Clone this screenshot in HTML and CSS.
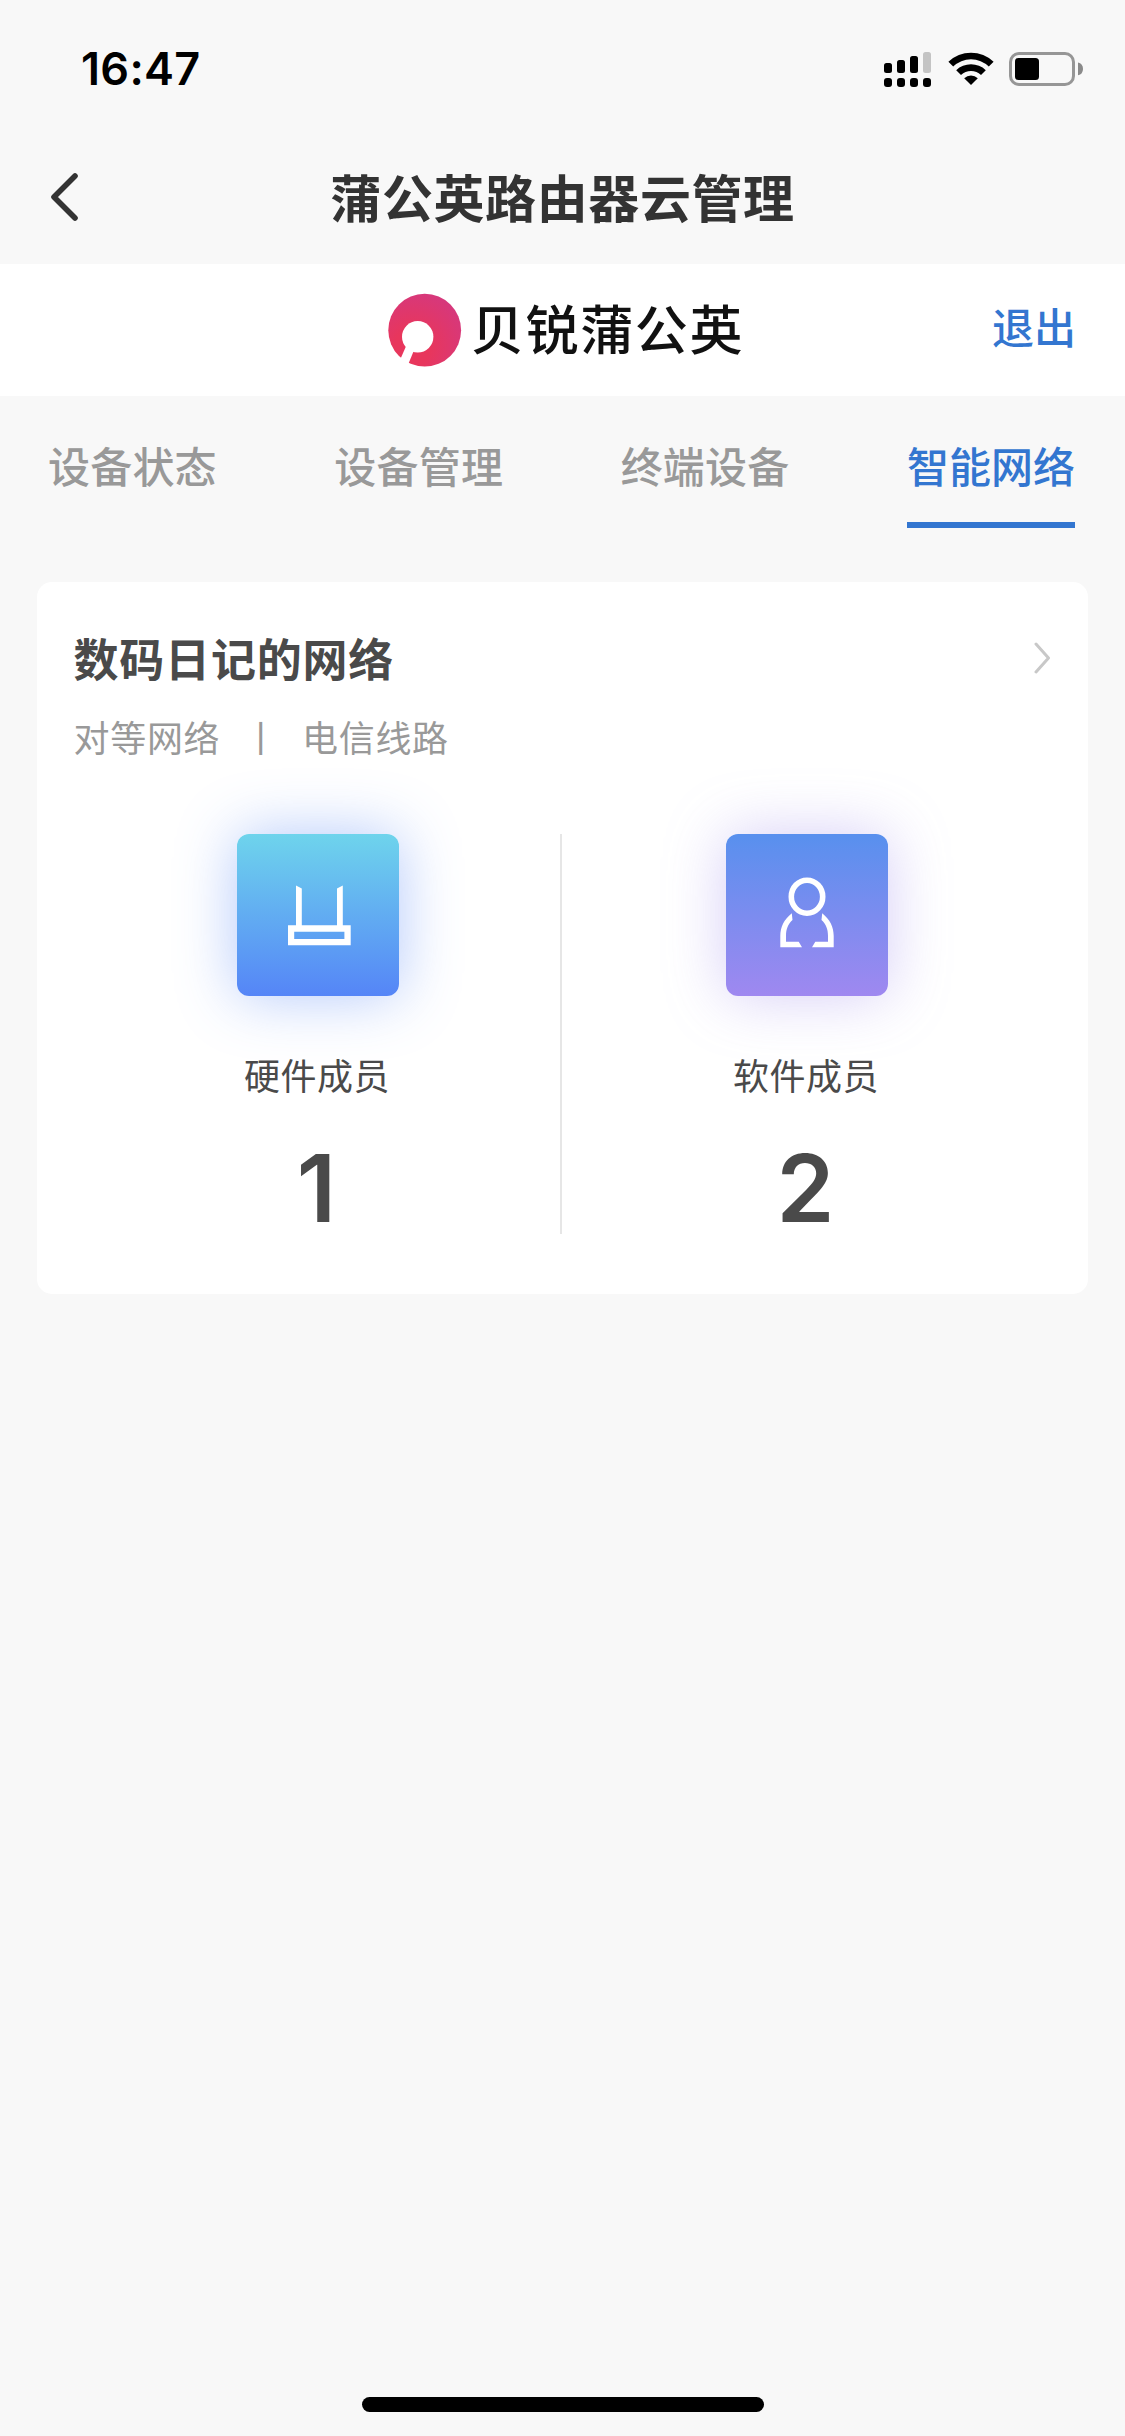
FILE: index.html
```
<!DOCTYPE html>
<html lang="zh-CN">
<head>
    <meta charset="UTF-8">
    <meta name="viewport" content="width=device-width, initial-scale=1.0">
    <title>蒲公英路由器云管理</title>
    <link rel="stylesheet" href="styles.css">
</head>
<body>
    <div class="status-bar">
        <span class="time">16:47</span>
        <div class="status-icons">
            <svg class="signal" width="48" height="36" viewBox="0 0 48 36">
                <rect x="0" y="12" width="8" height="10" rx="2.5"/>
                <rect x="13" y="9" width="8" height="13" rx="2.5"/>
                <rect x="26" y="5" width="8" height="17" rx="2.5"/>
                <rect x="39" y="1" width="8" height="21" rx="2.5" fill="#c4c4c4"/>
                <rect x="0" y="27" width="8" height="9" rx="3"/>
                <rect x="13" y="27" width="8" height="9" rx="3"/>
                <rect x="26" y="27" width="8" height="9" rx="3"/>
                <rect x="39" y="27" width="8" height="9" rx="3"/>
            </svg>
            <svg class="wifi" width="46" height="34" viewBox="0 0 46 34">
                <path d="M0.4 9.8 A32.5 32.5 0 0 1 45.6 9.8 L40.8 14.6 A25.5 25.5 0 0 0 5.2 14.6 Z"/>
                <path d="M8.2 18.2 A21.5 21.5 0 0 1 37.8 18.2 L33 23 A14.6 14.6 0 0 0 13 23 Z"/>
                <path d="M16.2 26.2 A10.2 10.2 0 0 1 29.8 26.2 L23 33 Z"/>
            </svg>
            <svg class="battery" width="74" height="34" viewBox="0 0 74 34">
                <rect x="1.5" y="1.5" width="63" height="31" rx="8.5" fill="none" stroke="#969696" stroke-width="3"/>
                <rect x="6" y="6" width="24" height="22" rx="3.5"/>
                <path d="M69 10.5 A6.6 6.6 0 0 1 69 23.3 Z" fill="#8a8a8a"/>
            </svg>
        </div>
    </div>

    <div class="nav-bar">
        <svg class="back" width="30" height="50" viewBox="0 0 30 50">
            <path d="M25 4 L4 25 L25 46" fill="none" stroke="#333" stroke-width="5.6" stroke-linecap="round" stroke-linejoin="round"/>
        </svg>
        <h1>蒲公英路由器云管理</h1>
    </div>

    <div class="brand-bar">
        <div class="brand">
            <svg width="74" height="74" viewBox="0 0 74 74">
                <defs>
                    <radialGradient id="brand-fill" cx="0.32" cy="0.75" r="0.8">
                        <stop offset="0.3" stop-color="#e8365c"/>
                        <stop offset="1" stop-color="#d6387c"/>
                    </radialGradient>
                </defs>
                <circle cx="36.7" cy="37.2" r="36.4" fill="url(#brand-fill)"/>
                <circle cx="29.7" cy="43.8" r="15.7" fill="#fff"/>
                <path d="M18 53.2 L12 67 L19.5 73 L25.5 58.5 Z" fill="#fff"/>
            </svg>
            <span class="brand-name">贝锐蒲公英</span>
        </div>
        <a class="logout">退出</a>
    </div>

    <div class="tabs">
        <div class="tab">设备状态</div>
        <div class="tab">设备管理</div>
        <div class="tab">终端设备</div>
        <div class="tab active">智能网络</div>
    </div>

    <div class="card">
        <div class="card-header">
            <h2>数码日记的网络</h2>
            <svg width="18" height="34" viewBox="0 0 18 34">
                <path d="M2 3 L14.5 17 L2 31" fill="none" stroke="#c8c8c8" stroke-width="3" stroke-linecap="round" stroke-linejoin="round"/>
            </svg>
        </div>
        <div class="card-info">
            <span>对等网络</span><span class="separator">丨</span><span>电信线路</span>
        </div>
        <div class="members">
            <div class="member">
                <div class="member-icon hardware">
                    <svg width="162" height="162" viewBox="0 0 162 162" fill="#fff">
                        <path d="M59 51.5 L64.8 54.5 V91.3 H100 V54.5 L105.8 51.5 V91.3 H113.7 V111.3 H51 V91.3 H59 Z M57.2 97.8 V105 H107.4 V97.8 Z" fill-rule="evenodd"/>
                    </svg>
                </div>
                <div class="member-label">硬件成员</div>
                <div class="member-count">1</div>
            </div>
            <div class="member">
                <div class="member-icon software">
                    <svg width="162" height="162" viewBox="0 0 162 162" fill="#fff">
                        <ellipse cx="81" cy="62.7" rx="15.7" ry="16.5" fill="none" stroke="#fff" stroke-width="5.6"/>
                        <path d="M65.8 79.3 C58 85.5 54.3 93 54.3 102 V113.3 H76 L72.7 107.8 H60 V102 C60 95 62 90 66.5 86 Z"/>
                        <path d="M96.2 79.3 C104 85.5 107.7 93 107.7 102 V113.3 H86 L89.3 107.8 H102 V102 C102 95 100 90 95.5 86 Z"/>
                    </svg>
                </div>
                <div class="member-label">软件成员</div>
                <div class="member-count">2</div>
            </div>
        </div>
    </div>

    <div class="home-indicator"></div>
</body>
</html>
```
FILE: styles.css
```
* {
    box-sizing: border-box;
}
body {
    margin: 0;
    min-height: 2436px;
    display: flex;
    flex-direction: column;
    background-color: #f8f8f8;
    color: #4a4a4a;
    font-family: "Noto Sans CJK SC", sans-serif;
}
svg {
    display: block;
}
h1, h2 {
    margin: 0;
}
.status-bar {
    display: flex;
    justify-content: space-between;
    height: 132px;
    padding: 51px 42px 0 81px;
    color: #000;
}
.time {
    font-family: Inter, sans-serif;
    font-size: 45px;
    font-weight: 600;
    line-height: 36px;
    letter-spacing: 0.3px;
}
.status-icons {
    display: flex;
    align-items: flex-start;
}
.wifi {
    margin: 1px 15px 0 16px;
}
.battery {
    margin-top: 1px;
}
.nav-bar {
    display: flex;
    align-items: center;
    height: 132px;
    padding: 0 50px 2px;
}
.back {
    margin-right: -30px;
}
h1 {
    flex: 1;
    padding-bottom: 3px;
    text-align: center;
    font-size: 51px;
    font-weight: 700;
    line-height: 72px;
    letter-spacing: 0.6px;
    color: #333;
}
.brand-bar {
    display: flex;
    align-items: center;
    justify-content: space-between;
    height: 132px;
    padding: 0 49px 0 388px;
    background-color: #fff;
}
.brand {
    display: flex;
    align-items: center;
    gap: 9px;
}
.brand-name {
    padding-bottom: 6px;
    font-size: 53px;
    font-weight: 500;
    line-height: 68px;
    letter-spacing: 1.6px;
    color: #111;
}
.logout {
    padding-bottom: 9px;
    font-size: 42px;
    font-weight: 500;
    line-height: 60px;
    color: #3376d0;
}
.tabs {
    display: flex;
    justify-content: space-between;
    height: 186px;
    padding: 0 50px 0 48px;
}
.tab {
    height: 132px;
    padding-top: 39px;
    font-size: 42px;
    font-weight: 500;
    line-height: 60px;
    letter-spacing: 0.2px;
    color: #999;
}
.tab.active {
    letter-spacing: 0;
    color: #3376d0;
    border-bottom: 6px solid #3376d0;
}
.card {
    height: 712px;
    margin: 0 37px;
    padding: 42px 36.5px 0;
    background-color: #fff;
    border-radius: 15px;
}
.card-header {
    display: flex;
    align-items: center;
    justify-content: space-between;
    height: 68px;
}
h2 {
    font-size: 45px;
    font-weight: 700;
    line-height: 68px;
    letter-spacing: 0.8px;
}
.card-info {
    display: flex;
    margin-top: 17px;
    font-size: 36px;
    line-height: 54px;
    letter-spacing: 0.7px;
    color: #999;
}
.separator {
    margin: 0 22.5px;
}
.members {
    display: flex;
    height: 400px;
    margin-top: 71px;
}
.member {
    flex: 1;
    display: flex;
    flex-direction: column;
    align-items: center;
    padding-left: 1px;
}
.member:first-child {
    flex: none;
    width: 488px;
    padding-left: 3px;
    border-right: 2px solid #e6e6e6;
}
.member-icon {
    width: 162px;
    height: 162px;
    border-radius: 12px;
}
.hardware {
    background: linear-gradient(#6ed4ec, #5585f7);
    box-shadow: 0 0 60px rgba(85, 133, 247, 0.45);
}
.software {
    background: linear-gradient(#5890ee, #9f88f0);
    box-shadow: 0 0 60px rgba(150, 130, 235, 0.4);
}
.member-label {
    margin-top: 51px;
    padding-right: 2px;
    font-size: 36px;
    line-height: 54px;
    letter-spacing: 0.5px;
}
.member-count {
    margin-top: 37px;
    font-family: Inter, sans-serif;
    font-size: 93px;
    font-weight: 600;
    line-height: 100px;
    letter-spacing: 3px;
}
.home-indicator {
    width: 402px;
    height: 15px;
    margin: auto auto 24px;
    border-radius: 8px;
    background-color: #000;
}
```
